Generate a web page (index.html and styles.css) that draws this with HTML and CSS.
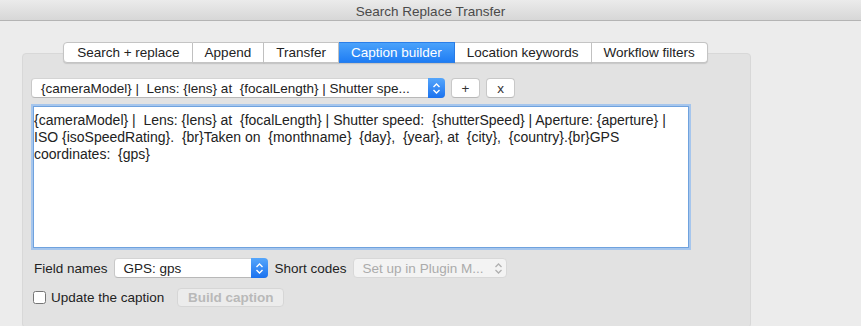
FILE: index.html
```html
<!DOCTYPE html>
<html lang="en">

<head>
    <meta charset="UTF-8">
    <title>Search Replace Transfer</title>
    <link rel="stylesheet" href="styles.css">
</head>

<body>
    <div class="titlebar">Search Replace Transfer</div>
    <div class="window">
        <div class="tabview">
            <div class="tabs">
                <div class="tab">Search + replace</div>
                <div class="tab">Append</div>
                <div class="tab">Transfer</div>
                <div class="tab active">Caption builder</div>
                <div class="tab">Location keywords</div>
                <div class="tab">Workflow filters</div>
            </div>
            <div class="panel">
                <div class="row">
                    <div class="popup template">
                        <span class="popup-text">{cameraModel} |  Lens: {lens} at  {focalLength} | Shutter spe...</span>
                        <span class="stepper">
                            <svg width="9" height="13" viewBox="0 0 9 13"><path d="M1.5 5 L4.5 2 L7.5 5 M1.5 8 L4.5 11 L7.5 8" fill="none" stroke="#fff" stroke-width="1.4"/></svg>
                        </span>
                    </div>
                    <button class="btn small">+</button>
                    <button class="btn small">x</button>
                </div>
                <textarea class="caption" spellcheck="false">{cameraModel} |  Lens: {lens} at  {focalLength} | Shutter speed:  {shutterSpeed} | Aperture: {aperture} |  ISO {isoSpeedRating}.  {br}Taken on  {monthname}  {day},  {year}, at  {city},  {country}.{br}GPS coordinates:  {gps}</textarea>
                <div class="row fields">
                    <label class="lbl">Field names</label>
                    <div class="popup field">
                        <span class="popup-text">GPS: gps</span>
                        <span class="stepper">
                            <svg width="9" height="13" viewBox="0 0 9 13"><path d="M1.5 5 L4.5 2 L7.5 5 M1.5 8 L4.5 11 L7.5 8" fill="none" stroke="#fff" stroke-width="1.4"/></svg>
                        </span>
                    </div>
                    <label class="lbl">Short codes</label>
                    <div class="popup codes disabled">
                        <span class="popup-text">Set up in Plugin M...</span>
                        <span class="stepper plain">
                            <svg width="9" height="13" viewBox="0 0 9 13"><path d="M1.5 5 L4.5 2 L7.5 5 M1.5 8 L4.5 11 L7.5 8" fill="none" stroke="#b0b0b0" stroke-width="1.3"/></svg>
                        </span>
                    </div>
                </div>
                <div class="row update">
                    <label class="check"><input type="checkbox"> Update the caption</label>
                    <button class="btn build" disabled>Build caption</button>
                </div>
            </div>
        </div>
    </div>
</body>

</html>
```

FILE: styles.css
```css
body {
    margin: 0;
    font-family: "Liberation Sans", Arial, sans-serif;
    font-size: 13.5px;
    color: #222;
    background-color: #ececec;
    height: 326px;
    overflow: hidden;
}

.titlebar {
    height: 20px;
    line-height: 24px;
    text-align: center;
    color: #4a4a4a;
    background: linear-gradient(#ebebeb, #d7d7d7);
    border-bottom: 1px solid #b4b4b4;
}

.window {
    padding: 21px 0 0 22px;
}

.tabview {
    width: 729px;
}

.tabs {
    display: flex;
    justify-content: center;
    position: relative;
    z-index: 1;
    margin-right: 2px;
}

.tab {
    height: 19px;
    line-height: 19px;
    padding: 0 12px;
    background-color: #fff;
    border: 1px solid #c4c4c4;
    border-left: none;
    box-shadow: 0 1px 1px rgba(0, 0, 0, 0.12);
}

.tab:first-child {
    border-left: 1px solid #c4c4c4;
    border-radius: 4px 0 0 4px;
    padding-left: 13px;
}

.tab:last-child {
    border-radius: 0 4px 4px 0;
}

.tab.active {
    color: #fff;
    background: linear-gradient(#4aa2fb, #1f7df4);
    border-color: #2a7ee8;
}

.panel {
    margin-top: -10px;
    height: 275px;
    padding: 24px 0 0 8px;
    background-color: #e2e2e2;
    border: 1px solid #d8d8d8;
    border-radius: 4px;
    box-sizing: border-box;
}

.row {
    display: flex;
    align-items: center;
}

.popup {
    display: flex;
    align-items: center;
    height: 20px;
    box-sizing: border-box;
    background-color: #fff;
    border: 1px solid #c8c8c8;
    border-top-color: #d4d4d4;
    border-bottom-color: #b8b8b8;
    border-radius: 4px;
}

.popup-text {
    flex: 1;
    padding-left: 9px;
    white-space: pre;
    overflow: hidden;
}

.stepper {
    width: 17px;
    height: 20px;
    margin: -1px -1px -1px 0;
    display: flex;
    align-items: center;
    justify-content: center;
    background: linear-gradient(#55a6fb, #1b72ef);
    border-radius: 0 4px 4px 0;
}

.stepper.plain {
    background: none;
}

.template {
    width: 414px;
}

.btn {
    height: 20px;
    font-family: inherit;
    font-size: 13.5px;
    color: #333;
    background-color: #fff;
    border: 1px solid #c8c8c8;
    border-bottom-color: #b8b8b8;
    border-radius: 4px;
    padding: 0;
}

.btn.small {
    width: 29px;
    margin-left: 6px;
}

.caption {
    display: block;
    margin: 8px 0 0 2px;
    width: 656px;
    height: 142px;
    box-sizing: border-box;
    padding: 5px 0;
    font-family: inherit;
    font-size: 14px;
    line-height: 17px;
    color: #222;
    border: 1px solid #6fa2de;
    box-shadow: 0 0 0 2px #a6c6ed;
    outline: none;
    resize: none;
}

.fields {
    margin-top: 10px;
}

.lbl {
    margin: 0 6px 0 3px;
}

.field {
    width: 154px;
    margin-right: 4px;
}

.codes {
    width: 154px;
}

.disabled {
    color: #ababab;
    background-color: #f3f3f3;
    border-color: #d8d8d8;
}

.update {
    margin-top: 10px;
}

.check {
    display: flex;
    align-items: center;
}

.check input {
    width: 13px;
    height: 13px;
    margin: 0 5px 0 2px;
}

.btn.build {
    margin-left: 13px;
    width: 107px;
    height: 19px;
    font-weight: bold;
    color: #b9b9b9;
    background-color: #ececec;
    border-color: #d6d6d6;
}
```
